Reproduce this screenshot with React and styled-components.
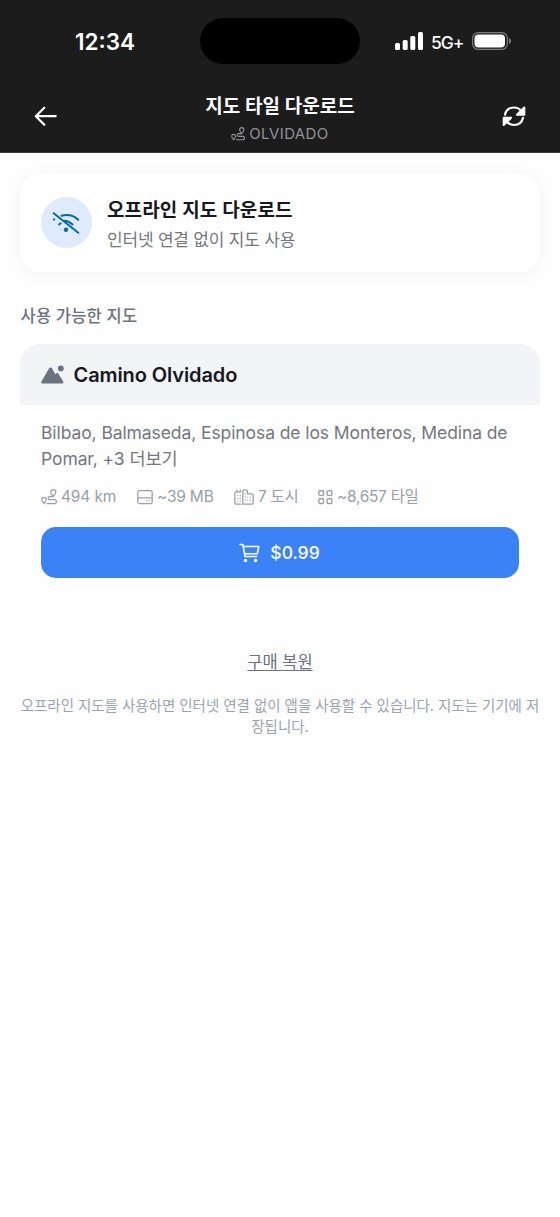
import React from 'react';
import styled, { createGlobalStyle } from 'styled-components';

const GlobalStyle = createGlobalStyle`
  *, *::before, *::after { box-sizing: border-box; }
  body {
    margin: 0;
    background: #fefefe;
    font-family: Inter, "Noto Sans CJK KR", sans-serif;
    -webkit-font-smoothing: antialiased;
  }
  svg { display: block; flex: none; }
  h1, h2, h3, p { margin: 0; }
`;

const Screen = styled.div`
  min-height: 1217px;
  width: 560px;
  background: #fefefe;
`;

const TopArea = styled.div`
  background: #1c1c1c;
  height: 153px;
  border-bottom: 1px solid #3a3a3a;
`;

const StatusBar = styled.div`
  display: grid;
  grid-template-columns: 200px 160px 200px;
  padding-top: 18px;
  height: 82px;
  color: #fff;
`;

const Clock = styled.div`
  padding: 10px 0 0 75px;
  font-size: 22.5px;
  line-height: 28px;
  font-weight: 600;
  letter-spacing: ${(p) => p.$tracking};
`;

const Island = styled.div`
  height: 46px;
  border-radius: 23px;
  background: #000;
`;

const StatusIcons = styled.div`
  display: flex;
  align-items: center;
  height: 46px;
  padding-left: 35px;
`;

const Network = styled.span`
  font-size: 17.5px;
  font-weight: 500;
  width: 32px;
  margin: 3px 9px 0 8px;
  letter-spacing: ${(p) => p.$tracking};
`;

const NavBar = styled.header`
  display: flex;
  align-items: center;
  justify-content: space-between;
  padding: 0 34px;
  height: 70px;
`;

const NavButton = styled.button`
  border: 0;
  padding: 0;
  background: none;
  color: #fff;
  width: 24px;
  height: 24px;
  margin-top: -3px;
`;

const NavTitle = styled.div`
  display: flex;
  flex-direction: column;
  align-items: center;
  padding-top: 4px;
`;

const Title = styled.h1`
  font-size: 19px;
  line-height: 29px;
  font-weight: 600;
  color: #fff;
  white-space: nowrap;
  letter-spacing: ${(p) => p.$tracking};
`;

const Subtitle = styled.div`
  display: flex;
  align-items: center;
  gap: 4px;
  height: 25px;
  color: #929296;
  font-size: 15px;
  letter-spacing: ${(p) => p.$tracking};
`;

const Content = styled.main`
  padding: 20px;
`;

const IntroCard = styled.section`
  display: flex;
  align-items: center;
  gap: 15px;
  height: 99px;
  padding: 0 21px;
  border-radius: 21px;
  background: #fff;
  box-shadow: 0 2px 18px rgba(0, 0, 0, 0.05);
`;

const RoundIcon = styled.div`
  display: grid;
  place-items: center;
  flex: none;
  width: 51px;
  height: 51px;
  padding-right: 2px;
  border-radius: 50%;
  background: #dfeafd;
  color: #0369a1;
`;

const IntroTitle = styled.h2`
  padding-top: 5px;
  font-size: 19px;
  line-height: 28px;
  font-weight: 600;
  color: #15181f;
  white-space: nowrap;
  letter-spacing: ${(p) => p.$tracking};
`;

const IntroText = styled.p`
  font-size: 17px;
  line-height: 26px;
  margin-top: 2px;
  color: #74777e;
  white-space: nowrap;
  letter-spacing: ${(p) => p.$tracking};
`;

const SectionLabel = styled.h3`
  margin-top: 32px;
  padding-left: 0.5px;
  font-size: 16.5px;
  line-height: 25px;
  font-weight: 500;
  color: #6b7280;
  letter-spacing: ${(p) => p.$tracking};
`;

const MapCard = styled.section`
  margin-top: 15px;
`;

const MapHeader = styled.div`
  display: flex;
  align-items: center;
  gap: 10px;
  height: 61px;
  padding: 0 20.5px;
  border-radius: 20px 20px 0 0;
  background: #f2f4f6;
  color: #6b7280;
`;

const MapName = styled.h2`
  font-size: 20px;
  line-height: 28px;
  font-weight: 600;
  color: #15181f;
  letter-spacing: ${(p) => p.$tracking};
`;

const MapBody = styled.div`
  padding: 15px 21px 0;
`;

const Cities = styled.p`
  font-size: 17.5px;
  line-height: 25.5px;
  color: #74777e;
  white-space: nowrap;
  letter-spacing: ${(p) => p.$tracking};
`;

const Stats = styled.div`
  display: grid;
  grid-template-columns: 96px 97px 84px auto;
  height: 24px;
  margin-top: 14px;
`;

const Stat = styled.div`
  display: flex;
  align-items: center;
  gap: 4px;
  color: #9a9ea6;
  font-size: 15.5px;
  line-height: 24px;
  white-space: nowrap;
  letter-spacing: ${(p) => p.$tracking};
`;

const BuyButton = styled.button`
  display: flex;
  align-items: center;
  justify-content: center;
  gap: 10px;
  width: 100%;
  height: 51px;
  margin-top: 18px;
  padding: 0 1px 0 0;
  border: 0;
  border-radius: 15px;
  background: #3b82f6;
  color: #fff;
  font: 500 17.5px Inter, sans-serif;
  letter-spacing: ${(p) => p.$tracking};
`;

const Restore = styled.button`
  display: block;
  margin: 70px auto 0;
  padding: 0;
  border: 0;
  background: none;
  color: #6b7280;
  font: 400 16.5px/28px Inter, "Noto Sans CJK KR", sans-serif;
  text-decoration: underline;
  text-decoration-thickness: 1px;
  text-underline-offset: 2px;
  letter-spacing: ${(p) => p.$tracking};
`;

const Footnote = styled.p`
  margin-top: 20px;
  font-size: 14.5px;
  line-height: 20.5px;
  text-align: center;
  color: #9ca3af;
  white-space: nowrap;
  letter-spacing: ${(p) => p.$tracking};
`;

const Line = styled.svg.attrs({ fill: 'none', stroke: 'currentColor', strokeLinecap: 'round', strokeLinejoin: 'round' })``;

const BackIcon = () => (
  <Line width="24" height="24" viewBox="0 0 24 24" strokeWidth="2.2">
    <path d="M21.7 12.2H1.8M10.3 3.7 1.8 12.2l8.500 8.500" />
  </Line>
);

const SyncIcon = () => (
  <Line width="24" height="24" viewBox="0 0 24 24" strokeWidth="2.2">
    <path d="M3 10.7C4 6 7.6 3.500 12 3.500c3.200 0 5.600 1.200 7.400 3.600M21 13.800c-1 4.700-4.600 7.200-9 7.200-3.200 0-5.600-1.200-7.400-3.600" />
    <path fill="currentColor" stroke="none" d="M23.300 3.500v7.300a1 1 0 0 1-1 1H15c-.9 0-1.400-1-.8-1.700l7.400-7.400c.7-.6 1.700-.1 1.700.8ZM.7 21v-7.300a1 1 0 0 1 1-1H9c.9 0 1.400 1 .8 1.700l-7.400 7.400c-.7.600-1.700.1-1.700-.8Z" />
  </Line>
);

const SignalIcon = () => (
  <svg width="28" height="18" viewBox="0 0 28 18" fill="currentColor">
    <rect x="0" y="11" width="5" height="7" rx="1.5" />
    <rect x="7.7" y="8" width="5" height="10" rx="1.5" />
    <rect x="15.3" y="4" width="5" height="14" rx="1.5" />
    <rect x="23" y="0" width="5" height="18" rx="1.5" />
  </svg>
);

const BatteryIcon = () => (
  <svg width="40" height="18" viewBox="0 0 40 18">
    <rect x=".6" y=".6" width="34.8" height="16.8" rx="5.8" fill="none" stroke="#7b7b7b" strokeWidth="1.2" />
    <rect x="2.5" y="2.5" width="30.5" height="13" rx="4" fill="#fff" />
    <path d="M37 6c2.7 1 2.7 5 0 6Z" fill="#7b7b7b" />
  </svg>
);

const RouteIcon = ({ size = 16 }) => (
  <Line width={size} height={size} viewBox="0 0 16 16" strokeWidth="1.25">
    <path d="M3 14.600C1.600 13 .8 11.800.8 10.600a2.200 2.200 0 0 1 4.400 0c0 1.200-.8 2.400-2.200 4Z" />
    <path d="M12.300 7.400C10.700 5.700 9.800 4.500 9.800 3.200a2.500 2.500 0 0 1 5 0c0 1.300-.9 2.500-2.500 4.200Z" />
    <path d="M12.300 7.600H8.700a1.500 1.500 0 0 0 0 3.100h4.800a1.900 1.900 0 0 1 0 3.900H6" />
  </Line>
);

const WifiOffIcon = () => (
  <Line width="28" height="24" viewBox="0 0 28 24" strokeWidth="2">
    <path d="M1.700 2.200 26.300 21.800M9.500 4.700c5.800-1.500 12-.4 16.700 4M12.500 9.800c3 0 5.500 1.300 8 3.700M1.800 8.700l.5-.4M7.200 13.400l1.500-1.100" />
    <circle cx="14" cy="18.700" r="2.200" fill="currentColor" stroke="none" />
  </Line>
);

const MountainIcon = () => (
  <svg width="23" height="20" viewBox="0 0 23 20" fill="currentColor">
    <path d="M7.800 3.700c1-1.700 2.500-1.700 3.500 0l3.100 5.500 1.300-1.100c.6-.5 1.200-.4 1.600.3l4.900 8c.7 1.200.1 2.200-1.200 2.200H1.800C.4 18.600-.1 17.600.5 16.400Z" />
    <circle cx="19.800" cy="3.400" r="2.900" />
  </svg>
);

const DriveIcon = () => (
  <Line width="16" height="16" viewBox="0 0 16 16" strokeWidth="1.25">
    <rect x=".8" y="1.500" width="14.400" height="13" rx="1.800" />
    <path d="M1 8.800h14" />
    <path d="M9.500 11.700h.2M12 11.700h.2" />
  </Line>
);

const CityIcon = () => (
  <Line width="20" height="16" viewBox="0 0 20 16" strokeWidth="1.25">
    <path d="M7 15H2.400A1.600 1.600 0 0 1 .8 13.400V4.500A1.600 1.600 0 0 1 2.400 2.900h4.300M2.800 2.900V1M6.300 2.700V.8" />
    <path d="M8.800 15V2.400A1.600 1.600 0 0 1 10.400.8h1.400a1.600 1.600 0 0 1 1.600 1.600v2.400h4.200a1.600 1.600 0 0 1 1.600 1.600v7a1.600 1.600 0 0 1-1.600 1.600Z" />
    <path strokeDasharray=".2 2.800" d="M4 6v7M6.300 6v7M11.200 4.500v8M13.800 8v5M16.500 8v5" />
  </Line>
);

const GridIcon = () => (
  <Line width="15" height="16" viewBox="0 0 15 16" strokeWidth="1.400">
    <rect x=".9" y="1.700" width="4.700" height="4.700" rx=".9" />
    <rect x="9.100" y="1.700" width="4.700" height="4.700" rx=".9" />
    <rect x=".9" y="9.800" width="4.700" height="4.700" rx=".9" />
    <rect x="9.100" y="9.800" width="4.700" height="4.700" rx=".9" />
  </Line>
);

const CartIcon = () => (
  <Line width="21" height="20" viewBox="0 0 21 20" strokeWidth="1.600">
    <path d="M1 1.500h2.900L6 13.500h11.600M4.200 3.500h15.600l-1.500 7.200H5.500" />
    <circle cx="6.500" cy="17.500" r="1.700" fill="currentColor" stroke="none" />
    <circle cx="16.600" cy="17.500" r="1.700" fill="currentColor" stroke="none" />
  </Line>
);

export default function App() {
  return (
    <Screen>
      <GlobalStyle />
      <TopArea>
        <StatusBar>
          <Clock $tracking="0">12:34</Clock>
          <Island />
          <StatusIcons>
            <SignalIcon />
            <Network $tracking="-1.1px">5G+</Network>
            <BatteryIcon />
          </StatusIcons>
        </StatusBar>
        <NavBar>
          <NavButton aria-label="뒤로"><BackIcon /></NavButton>
          <NavTitle>
            <Title $tracking="0">지도 타일 다운로드</Title>
            <Subtitle $tracking="0.4px"><RouteIcon size={14} />OLVIDADO</Subtitle>
          </NavTitle>
          <NavButton aria-label="새로고침"><SyncIcon /></NavButton>
        </NavBar>
      </TopArea>
      <Content>
        <IntroCard>
          <RoundIcon><WifiOffIcon /></RoundIcon>
          <div>
            <IntroTitle $tracking="0.1px">오프라인 지도 다운로드</IntroTitle>
            <IntroText $tracking="-0.2px">인터넷 연결 없이 지도 사용</IntroText>
          </div>
        </IntroCard>
        <SectionLabel $tracking="0.2px">사용 가능한 지도</SectionLabel>
        <MapCard>
          <MapHeader>
            <MountainIcon />
            <MapName $tracking="-0.1px">Camino Olvidado</MapName>
          </MapHeader>
          <MapBody>
            <Cities $tracking="-0.09px">
              Bilbao, Balmaseda, Espinosa de los Monteros, Medina de<br />
              Pomar, +3 더보기
            </Cities>
            <Stats>
              <Stat $tracking="-0.15px"><RouteIcon />494 km</Stat>
              <Stat $tracking="-0.2px"><DriveIcon />~39 MB</Stat>
              <Stat $tracking="-0.3px"><CityIcon />7 도시</Stat>
              <Stat $tracking="-0.3px"><GridIcon />~8,657 타일</Stat>
            </Stats>
            <BuyButton $tracking="0"><CartIcon />$0.99</BuyButton>
          </MapBody>
        </MapCard>
        <Restore $tracking="0">구매 복원</Restore>
        <Footnote $tracking="-0.03px">
          오프라인 지도를 사용하면 인터넷 연결 없이 앱을 사용할 수 있습니다. 지도는 기기에 저<br />
          장됩니다.
        </Footnote>
      </Content>
    </Screen>
  );
}
